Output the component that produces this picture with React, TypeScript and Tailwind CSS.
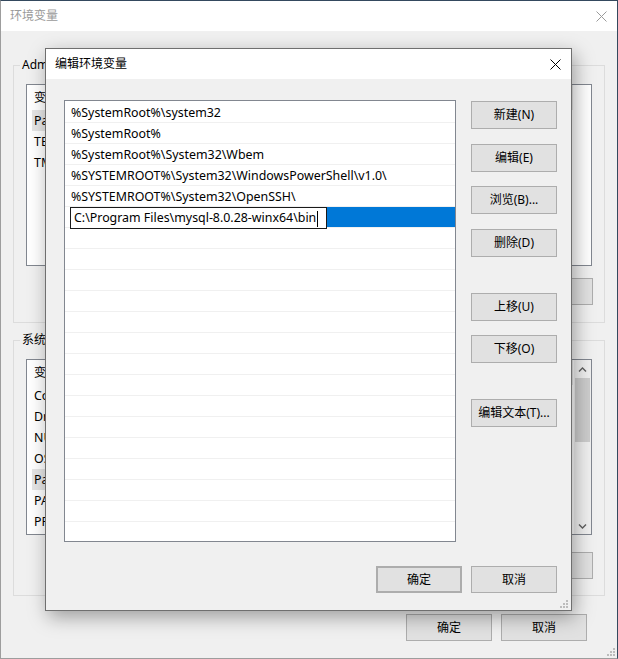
import type { ReactNode } from "react"

const userVars = [
  { name: "Path", value: "%USERPROFILE%\\AppData\\Local\\Microsoft\\WindowsApps;" },
  { name: "TEMP", value: "%USERPROFILE%\\AppData\\Local\\Temp" },
  { name: "TMP", value: "%USERPROFILE%\\AppData\\Local\\Temp" },
]

const systemVars = [
  { name: "ComSpec", value: "C:\\Windows\\system32\\cmd.exe" },
  { name: "DriverData", value: "C:\\Windows\\System32\\Drivers\\DriverData" },
  { name: "NUMBER_OF_PROCESSORS", value: "8" },
  { name: "OS", value: "Windows_NT" },
  { name: "Path", value: "C:\\Windows\\system32;C:\\Windows;C:\\Windows\\System32\\Wbem;..." },
  { name: "PATHEXT", value: ".COM;.EXE;.BAT;.CMD;.VBS;.VBE;.JS;.JSE;.WSF;.WSH;.MSC" },
  { name: "PROCESSOR_ARCHITECTURE", value: "AMD64" },
]

const pathItems = [
  "%SystemRoot%\\system32",
  "%SystemRoot%",
  "%SystemRoot%\\System32\\Wbem",
  "%SYSTEMROOT%\\System32\\WindowsPowerShell\\v1.0\\",
  "%SYSTEMROOT%\\System32\\OpenSSH\\",
]

function WinButton({ children, className = "" }: { children: ReactNode; className?: string }) {
  return (
    <div
      className={`flex w-[86px] shrink-0 items-center justify-center border border-[#adadad] bg-[#e1e1e1] text-[12px] text-black ${className}`}
    >
      {children}
    </div>
  )
}

function CloseIcon({ className = "" }: { className?: string }) {
  return (
    <svg width="11" height="11" viewBox="0 0 11 11" className={className}>
      <path d="M0.5 0.5L10.5 10.5M10.5 0.5L0.5 10.5" stroke="currentColor" strokeWidth="1" />
    </svg>
  )
}

function Grip() {
  const dots = [
    [6, 0],
    [3, 3],
    [6, 3],
    [0, 6],
    [3, 6],
    [6, 6],
  ]
  return (
    <svg width="8" height="8" viewBox="0 0 8 8">
      {dots.map(([x, y]) => (
        <rect key={`${x}-${y}`} x={x} y={y} width="2" height="2" fill="#bcbcbc" />
      ))}
    </svg>
  )
}

function Chevron({ down = false }: { down?: boolean }) {
  return (
    <svg width="9" height="6" viewBox="0 0 9 6">
      <path
        d={down ? "M1 1.5L4.5 5L8 1.5" : "M1 4.5L4.5 1L8 4.5"}
        fill="none"
        stroke="#606060"
        strokeWidth="1.4"
      />
    </svg>
  )
}

function VarList({
  rows,
  className,
  scroll = false,
}: {
  rows: { name: string; value: string }[]
  className: string
  scroll?: boolean
}) {
  return (
    <div className={`flex w-[566px] overflow-hidden border border-[#828790] bg-white ${className}`}>
      <div className="min-w-0 flex-1">
        <div className="ml-[5px] flex h-[25px] items-center text-[12px]">
          <div className="w-[150px] shrink-0 pl-[2px]">变量</div>
          <div className="h-full w-[391px] shrink-0 border-r border-[#e5e5e5] pl-[4px] leading-[25px]">值</div>
        </div>
        {rows.map((r) => (
          <div key={r.name} className="ml-[5px] flex h-[21px] items-center whitespace-nowrap text-[12.4px]">
            <div
              className={`flex h-full w-[150px] shrink-0 items-center overflow-hidden pl-[2px] pt-[2px] ${
                r.name === "Path" ? "bg-[#e5e5e5]" : ""
              }`}
            >
              {r.name}
            </div>
            <div className="w-[380px] shrink-0 overflow-hidden text-ellipsis pl-[4px] pt-[2px]">{r.value}</div>
          </div>
        ))}
      </div>
      {scroll && (
        <div className="flex w-[17px] shrink-0 flex-col items-center bg-[#f0f0f0]">
          <div className="flex h-[17px] w-full items-center justify-center pt-[3px]">
            <Chevron />
          </div>
          <div className="mt-[1px] h-[64px] w-[15px] bg-[#cdcdcd]" />
          <div className="flex-1" />
          <div className="flex h-[17px] w-full items-center justify-center">
            <Chevron down />
          </div>
        </div>
      )}
    </div>
  )
}

function EditDialog() {
  const emptyRows = Array.from({ length: 16 }, (_, i) => i)
  return (
    <div className="absolute left-[44px] top-[47px] flex h-[563px] w-[527px] flex-col border border-[#6f6f6f] bg-[#f0f0f0] shadow-[3px_6px_18px_rgba(0,0,0,0.35)]">
      <div className="flex h-[30px] items-center justify-between bg-white pl-[9px] pr-[10px]">
        <span className="text-[12px] text-black">编辑环境变量</span>
        <CloseIcon className="text-black" />
      </div>

      <div className="flex pl-[18px] pr-[14px] pt-[21px]">
        <div className="h-[442px] w-[392px] overflow-hidden border border-[#828790] bg-white pt-[1px] text-[12.4px] text-black">
          {pathItems.map((p) => (
            <div
              key={p}
              className="flex h-[21px] items-center whitespace-nowrap border-b border-[#f0f0f0] pl-[6px] pt-[2px]"
            >
              {p}
            </div>
          ))}
          <div className="flex h-[21px] border-b border-[#f0f0f0]">
            <div className="w-[5px] bg-white" />
            <div className="flex h-[22px] w-[257px] items-center whitespace-nowrap border border-[#1a1a1a] bg-white pl-[3px] pt-[1px]">
              C:\Program Files\mysql-8.0.28-winx64\bin
              <span className="ml-[1px] inline-block h-[16px] w-[1px] bg-black" />
            </div>
            <div className="h-[20px] flex-1 bg-[#0078d7]" />
          </div>
          {emptyRows.map((i) => (
            <div key={i} className="h-[21px] border-b border-[#f0f0f0]" />
          ))}
        </div>

        <div className="ml-[15px] flex flex-col pt-[1px]">
          <WinButton className="h-[28px]">新建(N)</WinButton>
          <WinButton className="mt-[15px] h-[28px]">编辑(E)</WinButton>
          <WinButton className="mt-[14px] h-[28px]">浏览(B)...</WinButton>
          <WinButton className="mt-[15px] h-[28px]">删除(D)</WinButton>
          <WinButton className="mt-[36px] h-[28px]">上移(U)</WinButton>
          <WinButton className="mt-[14px] h-[28px]">下移(O)</WinButton>
          <WinButton className="mt-[36px] h-[28px]">编辑文本(T)...</WinButton>
        </div>
      </div>

      <div className="mt-[24px] flex justify-end gap-[9px] pr-[14px]">
        <WinButton className="h-[27px] border-2 border-[#0078d7]">确定</WinButton>
        <WinButton className="h-[27px]">取消</WinButton>
      </div>

      <div className="absolute bottom-[2px] right-[3px]">
        <Grip />
      </div>
    </div>
  )
}

export default function App() {
  return (
    <div className="relative h-[659px] w-[618px] overflow-hidden border border-[#9d9d9d] border-r-[#34495e] border-t-[#34495e] bg-[#f0f0f0] font-['Noto_Sans','Noto_Sans_CJK_SC',sans-serif] text-black">
      <div className="flex h-[30px] items-center justify-between bg-white pl-[9px] pr-[10px]">
        <span className="text-[12px] text-[#9a9a9a]">环境变量</span>
        <CloseIcon className="text-[#9a9a9a]" />
      </div>

      <div className="px-[12px]">
        <fieldset className="mt-[25px] min-w-0 border border-[#dcdcdc] pb-[17px] pl-[12px] pr-[11px] pt-[10px]">
          <legend className="-ml-[6px] px-[2px] text-[12px] leading-[18px]">Administrator 的用户变量(U)</legend>
          <VarList rows={userVars} className="h-[182px]" />
          <div className="mt-[12px] flex justify-end gap-[9px]">
            <WinButton className="h-[27px]">新建(N)...</WinButton>
            <WinButton className="h-[27px]">编辑(E)...</WinButton>
            <WinButton className="h-[27px]">删除(D)</WinButton>
          </div>
        </fieldset>

        <fieldset className="mt-[8px] min-w-0 border border-[#dcdcdc] pb-[16px] pl-[12px] pr-[11px] pt-[10px]">
          <legend className="-ml-[6px] px-[2px] text-[12px] leading-[18px]">系统变量(S)</legend>
          <VarList rows={systemVars} className="h-[176px]" scroll />
          <div className="mt-[17px] flex justify-end gap-[9px]">
            <WinButton className="h-[27px]">新建(W)...</WinButton>
            <WinButton className="h-[27px]">编辑(I)...</WinButton>
            <WinButton className="h-[27px]">删除(L)</WinButton>
          </div>
        </fieldset>

        <div className="mr-[18px] mt-[18px] flex justify-end gap-[9px]">
          <WinButton className="h-[27px]">确定</WinButton>
          <WinButton className="h-[27px]">取消</WinButton>
        </div>
      </div>

      <div className="absolute bottom-[2px] right-[2px]">
        <Grip />
      </div>

      <EditDialog />
    </div>
  )
}
